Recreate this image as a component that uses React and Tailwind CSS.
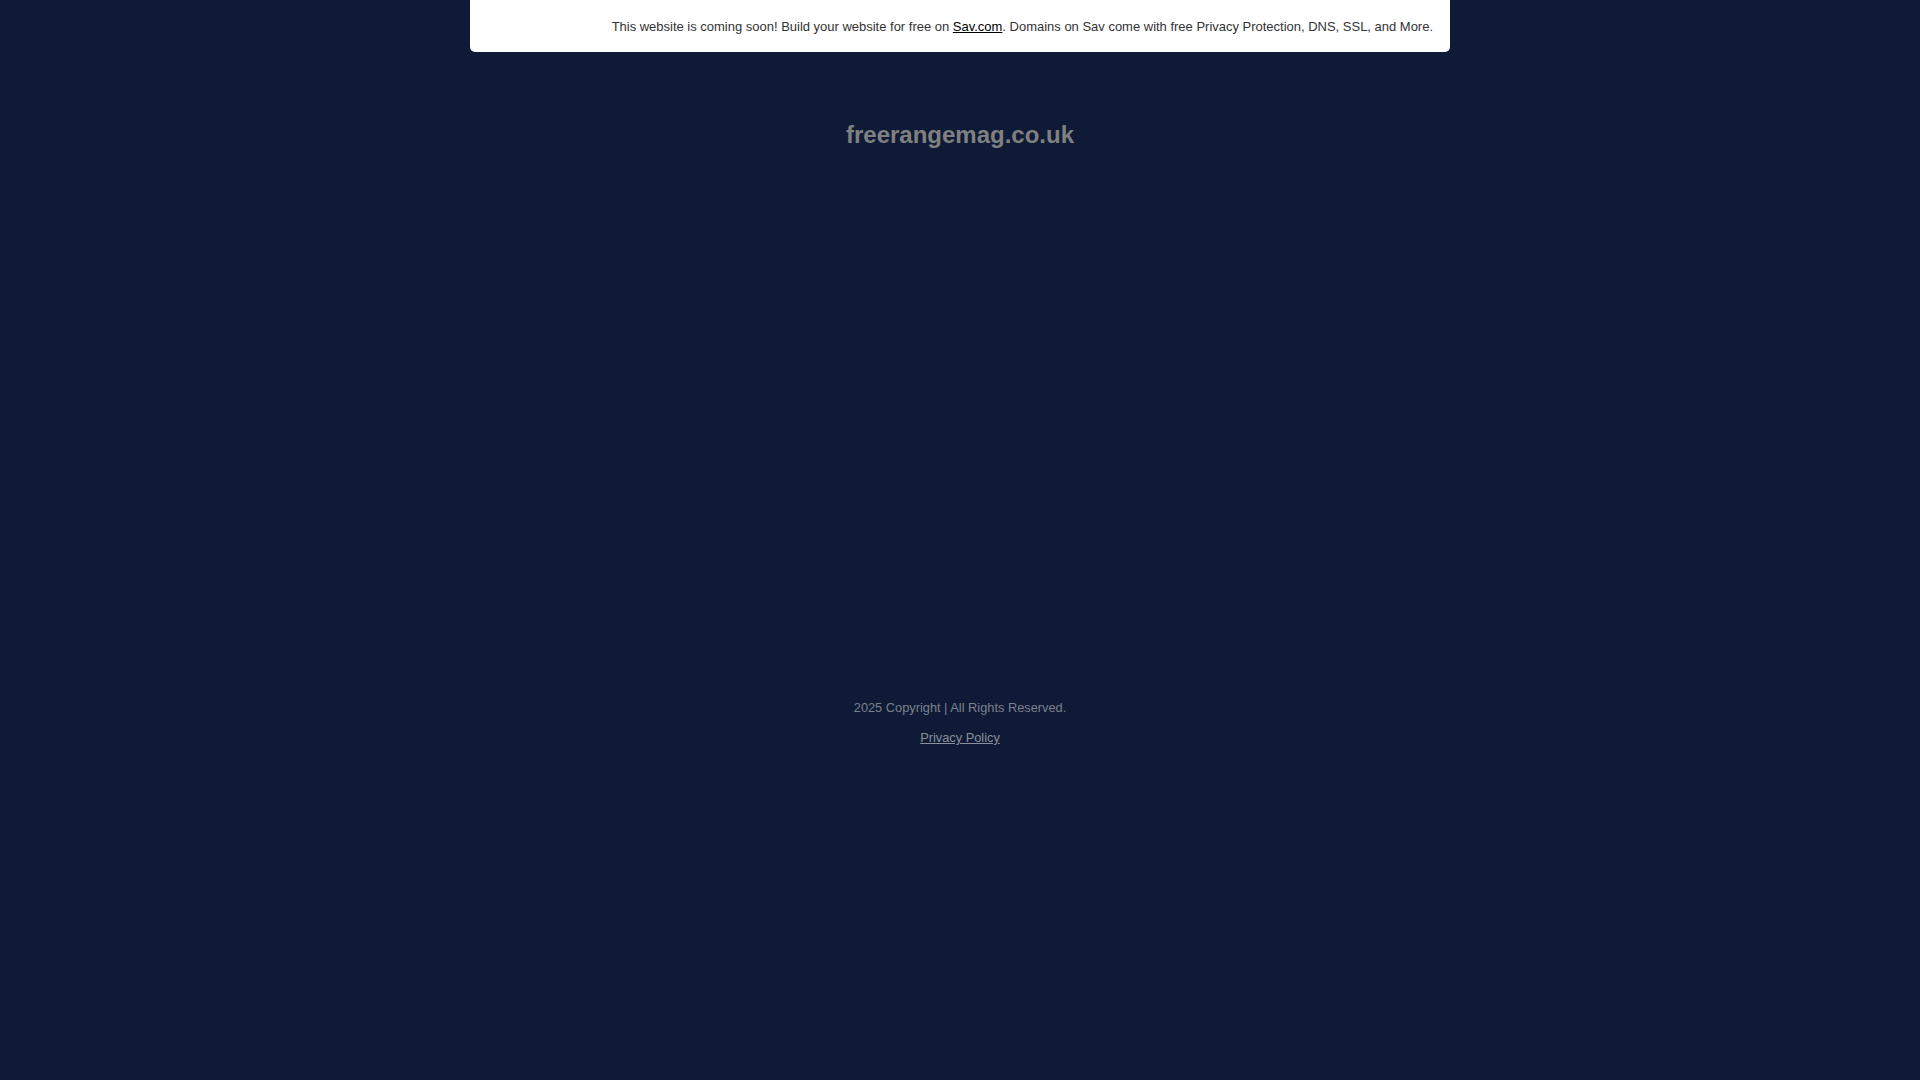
import React from 'react';

const App = () => {
  return (
    <div className="min-h-screen bg-[#0f1b36] font-['Liberation_Sans',Arial,sans-serif]">
      <div className="mx-auto w-[980px] h-[52px] bg-white rounded-b-[5px] flex items-center justify-end pr-[17px]">
        <p className="text-[13px] leading-[15px] tracking-[-0.01px] text-[#333333]">
          This website is coming soon! Build your website for free on{' '}
          <a href="#" className="underline text-black">Sav.com</a>
          . Domains on Sav come with free Privacy Protection, DNS, SSL, and More.
        </p>
      </div>

      <h1 className="mt-[69px] text-center text-[24px] leading-[28px] font-bold text-[#808080]">
        freerangemag.co.uk
      </h1>

      <div className="mt-[551px] text-center text-[12.8px] leading-[15px] text-[#7b808c]">
        <p>2025 Copyright | All Rights Reserved.</p>
        <p className="mt-[15px]">
          <a href="#" className="underline text-[#8a8f99]">Privacy Policy</a>
        </p>
      </div>
    </div>
  );
};

export default App;
